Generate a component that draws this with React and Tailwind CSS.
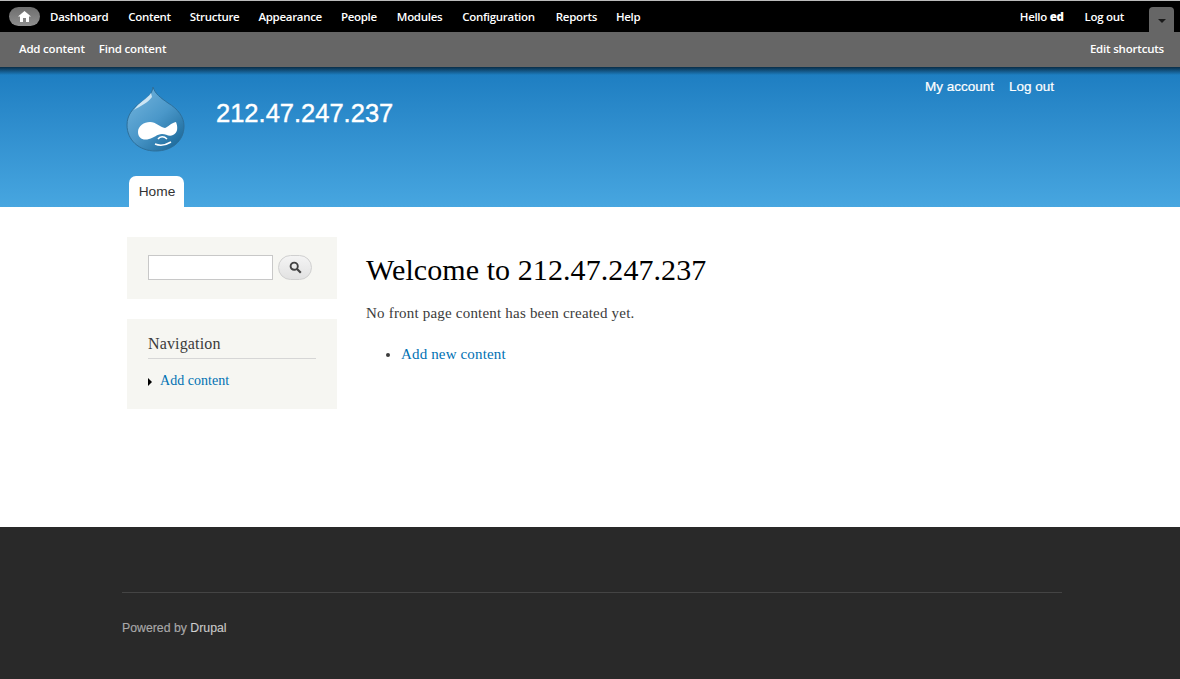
const navItems = [
  ["Dashboard", "mr-[20px]"],
  ["Content", "mr-[19px]"],
  ["Structure", "mr-[19px]"],
  ["Appearance", "mr-[19px]"],
  ["People", "mr-[20px]"],
  ["Modules", "mr-[20px]"],
  ["Configuration", "mr-[21px]"],
  ["Reports", "mr-[19px]"],
  ["Help", ""],
];

function DrupalLogo() {
  return (
    <svg width="60" height="67" viewBox="0 0 60 67" className="block">
      <defs>
        <linearGradient id="drop" x1="0.15" y1="0.1" x2="0.85" y2="0.95">
          <stop offset="0" stopColor="#6db0da" />
          <stop offset="0.5" stopColor="#4a97c9" />
          <stop offset="1" stopColor="#1d6b9c" />
        </linearGradient>
      </defs>
      <path d="M27 1 C29 8 35 12 42 17 C52 23 58 31 58 40 C58 55 46 65 29.500 65 C13 65 1 54 1 39 C1 29 7 22 14 17 C20 13 26 9 27 1 Z" fill="url(#drop)" stroke="#2d6f9a" strokeWidth="1" />
      <path d="M25 7 C21 13 13 16 8 24 C14 20 22 17 26 11 Z" fill="#d8ecf7" opacity="0.9" />
      <path d="M12 46 C12 40 18 36 24 36 C30 36 34 41 39 42 C42 41 45 37 50 36 C52 41 52 47 47 49 C43 51 40 48 36 48 C31 48 28 52 23 53 C17 55 12 52 12 46 Z" fill="#ffffff" />
      <path d="M32 53 C34 50 38 50 41 53" fill="none" stroke="#ffffff" strokeWidth="1.500" />
      <path d="M29 58 C34 60 40 59 45 56" fill="none" stroke="#ffffff" strokeWidth="1.500" />
    </svg>
  );
}

export default function App() {
  return (
    <div className="min-h-[679px] flex flex-col bg-white font-['Liberation_Sans',Arial,sans-serif]">
      {/* Toolbar */}
      <div className="h-[32px] bg-black border-t border-[#bbbbbb] flex items-center pl-[9px] pr-[6px] text-white text-[11.500px] tracking-[-0.3px] font-semibold font-['Open_Sans',sans-serif]">
        <div className="w-[31px] h-[19px] rounded-[10px] bg-gradient-to-b from-[#6e6e6e] to-[#8f8f8f] flex items-center justify-center mr-[10px] -mt-[1px]">
          <svg width="13" height="11" viewBox="0 0 13 11">
            <path d="M6.5 0 L13 5.500 L11 5.500 L11 11 L8 11 L8 7 L5 7 L5 11 L2 11 L2 5.500 L0 5.500 Z" fill="#ffffff" />
          </svg>
        </div>
        {navItems.map(([n, c]) => (
          <span key={n} className={c}>{n}</span>
        ))}
        <span className="ml-auto mr-[21px]">Hello <b>ed</b></span>
        <span className="mr-[25px]">Log out</span>
        <div className="w-[25px] h-[25px] self-end bg-[#666666] rounded-t-[4px] flex items-center justify-center">
          <div className="w-0 h-0 border-l-[4px] border-r-[4px] border-t-[4px] border-l-transparent border-r-transparent border-t-[#1a1a1a] mt-[3px]" />
        </div>
      </div>
      <div className="h-[35px] bg-[#666666] flex items-center pl-[19px] pr-[16px] pb-[1px] text-white text-[11.500px] tracking-[-0.2px] font-semibold font-['Open_Sans',sans-serif]">
        <span className="mr-[14px]">Add content</span>
        <span>Find content</span>
        <span className="ml-auto">Edit shortcuts</span>
      </div>

      {/* Header */}
      <div className="relative h-[140px] bg-gradient-to-b from-[#1b7cc0] to-[#47a6e0] pl-[126px] pr-[126px] flex flex-col">
        <div className="absolute inset-x-0 top-0 h-[8px] bg-gradient-to-b from-[#0a2e48] to-transparent" />
        <div className="flex items-start pt-[19px] h-[109px]">
          <DrupalLogo />
          <div className="ml-[30px] mt-[11px] text-white text-[25.500px] leading-[32px] [-webkit-text-stroke:0.4px_white]">212.47.247.237</div>
          <div className="ml-auto mt-[-7px] text-white text-[13.500px] leading-[16px] flex gap-[15px] [-webkit-text-stroke:0.2px_white]">
            <span>My account</span>
            <span>Log out</span>
          </div>
        </div>
        <div className="ml-[3px] w-[55px] h-[31px] bg-white rounded-t-[7px] flex items-center justify-center pt-[1px] pl-[1px] text-[13.700px] text-[#333333]">Home</div>
      </div>

      {/* Main */}
      <div className="h-[320px] pl-[127px] pt-[30px] flex font-['Liberation_Serif',Georgia,serif]">
        <div className="w-[210px] flex flex-col gap-[20px]">
          <div className="h-[62px] bg-[#f6f6f2] pl-[21px] pb-[1px] flex items-center">
            <div className="w-[125px] h-[25px] bg-white border border-[#c8c8c8]" />
            <div className="ml-[5px] w-[34px] h-[25px] rounded-[13px] border border-[#d0d0d0] bg-gradient-to-b from-[#f4f4f4] to-[#e2e2e2] flex items-center justify-center">
              <svg width="13" height="13" viewBox="0 0 13 13" fill="none" stroke="#444444">
                <circle cx="5.200" cy="5.200" r="3.600" strokeWidth="1.900" />
                <path d="M8 8 L11.800 11.800" strokeWidth="2.200" />
              </svg>
            </div>
          </div>
          <div className="h-[90px] bg-[#f6f6f2] pl-[21px] pr-[21px] pt-[15px]">
            <div className="text-[16px] leading-[20px] tracking-[0.15px] text-[#3b3b3b] pb-[4px] border-b border-[#d6d6d6]">Navigation</div>
            <div className="flex items-center mt-[13px]">
              <div className="w-0 h-0 border-t-[4px] border-b-[4px] border-l-[4px] border-t-transparent border-b-transparent border-l-black mr-[8px] mt-[1px]" />
              <span className="text-[14px] leading-[18px] tracking-[0.04px] text-[#0071b3]">Add content</span>
            </div>
          </div>
        </div>
        <div className="ml-[29px] pt-[15px]">
          <h1 className="text-[30px] leading-[36px] tracking-[0.08px] text-black">Welcome to 212.47.247.237</h1>
          <p className="mt-[15px] text-[15px] leading-[20px] tracking-[0.2px] text-[#3b3b3b]">No front page content has been created yet.</p>
          <ul className="mt-[21px] pl-[35px] list-disc text-[#3b3b3b]">
            <li className="text-[15px] leading-[20px] tracking-[0.15px]"><span className="text-[#0071b3]">Add new content</span></li>
          </ul>
        </div>
      </div>

      {/* Footer */}
      <div className="h-[152px] bg-[#292929] px-[122px] pt-[65px]">
        <div className="w-[940px] border-t border-[#444444]" />
        <div className="mt-[27px] text-[12.300px] leading-[16px] text-[#a8a8a8] [-webkit-text-stroke:0.15px_#a8a8a8]">
          Powered by <span className="text-[#d0d0d0]">Drupal</span>
        </div>
      </div>
    </div>
  );
}
